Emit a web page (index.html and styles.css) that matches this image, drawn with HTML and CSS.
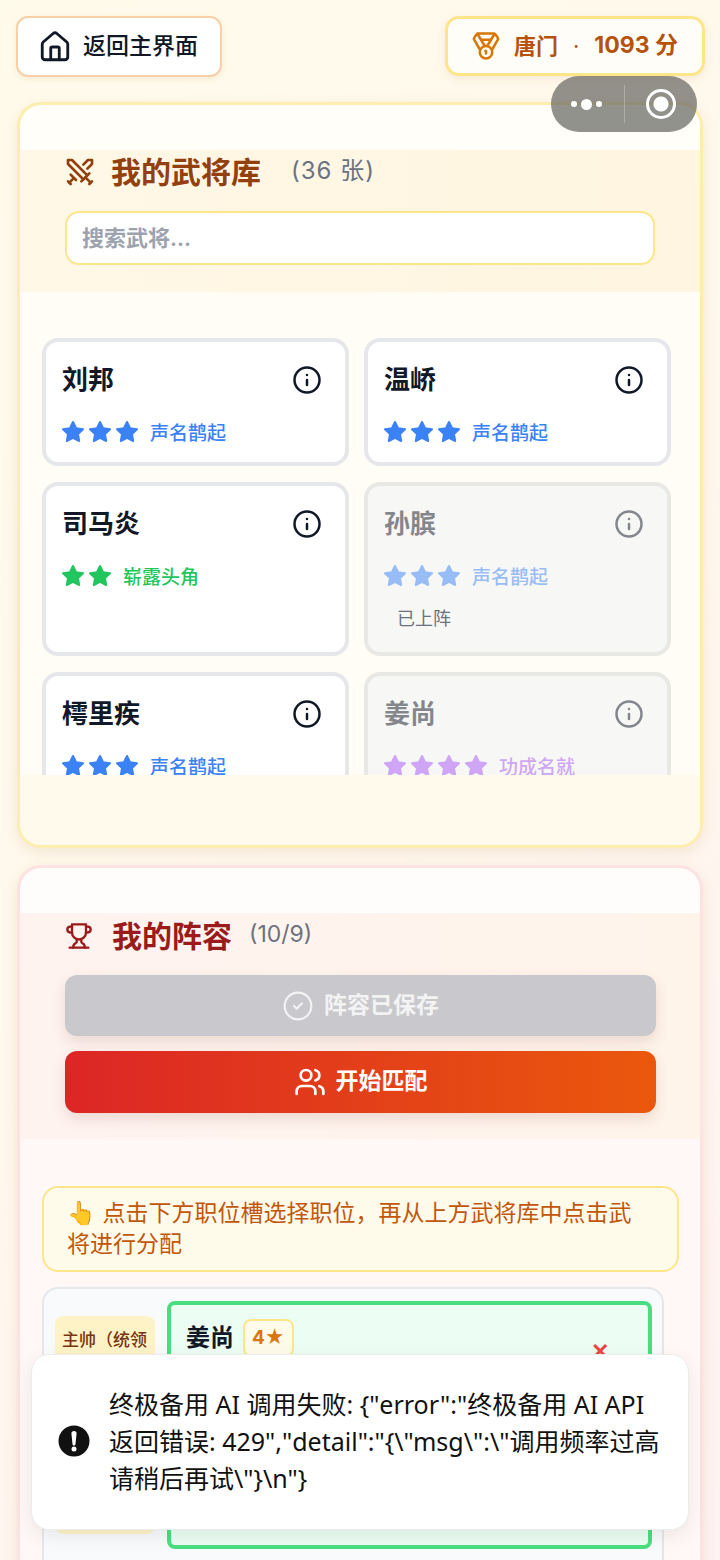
FILE: index.html
```html
<!DOCTYPE html>
<html lang="zh-CN">
<head>
    <meta charset="UTF-8">
    <meta name="viewport" content="width=device-width, initial-scale=1.0">
    <title>我的武将库</title>
    <link rel="stylesheet" href="styles.css">
</head>
<body>
    <svg class="defs" width="0" height="0">
        <symbol id="i-star" viewBox="0 0 24 24"><polygon points="12 2 15.09 8.26 22 9.27 17 14.14 18.18 21.02 12 17.77 5.82 21.02 7 14.14 2 9.27 8.91 8.26" fill="currentColor" stroke="currentColor" stroke-width="2" stroke-linejoin="round"/></symbol>
        <symbol id="i-info" viewBox="0 0 24 24"><g fill="none" stroke="currentColor" stroke-width="2" stroke-linecap="round"><circle cx="12" cy="12" r="10"/><path d="M12 16v-4"/><path d="M12 8h.01"/></g></symbol>
    </svg>

    <div class="topbar">
        <button class="back-btn">
            <svg class="ico-34" viewBox="0 0 24 24" fill="none" stroke="currentColor" stroke-width="2" stroke-linecap="round" stroke-linejoin="round"><path d="M15 21v-8a1 1 0 0 0-1-1h-4a1 1 0 0 0-1 1v8"/><path d="M3 10a2 2 0 0 1 .709-1.528l7-5.999a2 2 0 0 1 2.582 0l7 5.999A2 2 0 0 1 21 10v9a2 2 0 0 1-2 2H5a2 2 0 0 1-2-2z"/></svg>
            <span>返回主界面</span>
        </button>
        <div class="score">
            <svg class="ico-30 medal" viewBox="0 0 24 24" fill="none" stroke="currentColor" stroke-width="2" stroke-linecap="round" stroke-linejoin="round"><path d="M7.21 15 2.66 7.14a2 2 0 0 1 .13-2.2L4.4 2.8A2 2 0 0 1 6 2h12a2 2 0 0 1 1.6.8l1.6 2.14a2 2 0 0 1 .14 2.2L16.79 15"/><path d="M11 12 5.12 2.2"/><path d="m13 12 5.88-9.8"/><path d="M8 7h8"/><circle cx="12" cy="17" r="5"/><path d="M12 18v-2h-.5"/></svg>
            <span class="score-name">唐门</span>
            <span class="score-dot">·</span>
            <span class="score-num">1093 分</span>
        </div>
    </div>

    <section class="panel panel-lib">
        <div class="panel-head">
            <div class="title-row">
                <svg class="ico-32" viewBox="0 0 24 24" fill="none" stroke="currentColor" stroke-width="2" stroke-linecap="round" stroke-linejoin="round"><polyline points="14.5 17.5 3 6 3 3 6 3 17.5 14.5"/><line x1="13" y1="19" x2="19" y2="13"/><line x1="16" y1="16" x2="20" y2="20"/><line x1="19" y1="21" x2="21" y2="19"/><polyline points="14.5 6.5 18 3 21 3 21 6 17.5 9.5"/><line x1="5" y1="14" x2="9" y2="18"/><line x1="7" y1="17" x2="4" y2="20"/><line x1="3" y1="19" x2="5" y2="21"/></svg>
                <h2>我的武将库</h2>
                <span class="count count-lib">(36 张)</span>
            </div>
            <div class="search">搜索武将...</div>
        </div>

        <div class="lib-scroll">
            <div class="card-grid">
                <div class="card">
                    <div class="card-top"><span class="name">刘邦</span><svg class="info"><use href="#i-info"/></svg></div>
                    <div class="rank blue">
                        <svg class="star"><use href="#i-star"/></svg><svg class="star"><use href="#i-star"/></svg><svg class="star"><use href="#i-star"/></svg>
                        <span>声名鹊起</span>
                    </div>
                </div>
                <div class="card">
                    <div class="card-top"><span class="name">温峤</span><svg class="info"><use href="#i-info"/></svg></div>
                    <div class="rank blue">
                        <svg class="star"><use href="#i-star"/></svg><svg class="star"><use href="#i-star"/></svg><svg class="star"><use href="#i-star"/></svg>
                        <span>声名鹊起</span>
                    </div>
                </div>
                <div class="card">
                    <div class="card-top"><span class="name">司马炎</span><svg class="info"><use href="#i-info"/></svg></div>
                    <div class="rank green">
                        <svg class="star"><use href="#i-star"/></svg><svg class="star"><use href="#i-star"/></svg>
                        <span>崭露头角</span>
                    </div>
                </div>
                <div class="card used">
                    <div class="card-top"><span class="name">孙膑</span><svg class="info"><use href="#i-info"/></svg></div>
                    <div class="rank blue">
                        <svg class="star"><use href="#i-star"/></svg><svg class="star"><use href="#i-star"/></svg><svg class="star"><use href="#i-star"/></svg>
                        <span>声名鹊起</span>
                    </div>
                    <div class="used-tag">已上阵</div>
                </div>
                <div class="card">
                    <div class="card-top"><span class="name">樗里疾</span><svg class="info"><use href="#i-info"/></svg></div>
                    <div class="rank blue">
                        <svg class="star"><use href="#i-star"/></svg><svg class="star"><use href="#i-star"/></svg><svg class="star"><use href="#i-star"/></svg>
                        <span>声名鹊起</span>
                    </div>
                </div>
                <div class="card used">
                    <div class="card-top"><span class="name">姜尚</span><svg class="info"><use href="#i-info"/></svg></div>
                    <div class="rank purple">
                        <svg class="star"><use href="#i-star"/></svg><svg class="star"><use href="#i-star"/></svg><svg class="star"><use href="#i-star"/></svg><svg class="star"><use href="#i-star"/></svg>
                        <span>功成名就</span>
                    </div>
                </div>
            </div>
        </div>
        <div class="lib-foot"></div>
    </section>

    <section class="panel panel-team">
        <div class="panel-head">
            <div class="title-row">
                <svg class="ico-28" viewBox="0 0 24 24" fill="none" stroke="currentColor" stroke-width="2" stroke-linecap="round" stroke-linejoin="round"><path d="M6 9H4.5a2.5 2.5 0 0 1 0-5H6"/><path d="M18 9h1.5a2.5 2.5 0 0 0 0-5H18"/><path d="M4 22h16"/><path d="M10 14.66V17c0 .55-.47.98-.97 1.21C7.85 18.75 7 20.24 7 22"/><path d="M14 14.66V17c0 .55.47.98.97 1.21C16.15 18.75 17 20.24 17 22"/><path d="M18 2H6v7a6 6 0 0 0 12 0V2Z"/></svg>
                <h2>我的阵容</h2>
                <span class="count">(10/9)</span>
            </div>
            <button class="wide-btn saved">
                <svg class="ico-32" viewBox="0 0 24 24" fill="none" stroke="currentColor" stroke-width="1.6" stroke-linecap="round" stroke-linejoin="round"><circle cx="12" cy="12" r="10"/><path d="m9 12 2 2 4-4"/></svg>
                <span>阵容已保存</span>
            </button>
            <button class="wide-btn match">
                <svg class="ico-32" viewBox="0 0 24 24" fill="none" stroke="currentColor" stroke-width="2" stroke-linecap="round" stroke-linejoin="round"><path d="M16 21v-2a4 4 0 0 0-4-4H6a4 4 0 0 0-4 4v2"/><circle cx="9" cy="7" r="4"/><path d="M22 21v-2a4 4 0 0 0-3-3.87"/><path d="M16 3.13a4 4 0 0 1 0 7.75"/></svg>
                <span>开始匹配</span>
            </button>
        </div>

        <div class="team-body">
            <p class="hint">👆 点击下方职位槽选择职位，再从上方武将库中点击武将进行分配</p>
            <div class="slots">
                <div class="slot-label">主帅（统领全军）</div>
                <div class="slot-card">
                    <span class="slot-name">姜尚</span>
                    <span class="slot-badge">4★</span>
                    <span class="slot-x">✕</span>
                </div>
            </div>
        </div>
    </section>

    <!-- wechat capsule -->
    <div class="capsule">
        <div class="dots"><i></i><i class="big"></i><i></i></div>
        <div class="cap-line"></div>
        <div class="ring"></div>
    </div>

    <div class="toast">
        <svg class="toast-ico" viewBox="0 0 32 32"><circle cx="16" cy="16" r="15.5" fill="#111"/><path d="M13.4 8.6a2.6 2.6 0 0 1 5.2 0L17.5 19a1.5 1.5 0 0 1-3 0z" fill="#fff"/><circle cx="16" cy="24" r="2.5" fill="#fff"/></svg>
        <p>终极备用 AI 调用失败: {"error":"终极备用 AI API 返回错误: 429","detail":"{\"msg\":\"调用频率过高请稍后再试\"}\n"}</p>
    </div>
</body>
</html>
```

FILE: styles.css
```css
* {
    box-sizing: border-box;
}
html, body {
    margin: 0;
    height: 1560px;
    overflow: hidden;
}
body {
    position: relative;
    padding: 16px 15px 0 17px;
    background: linear-gradient(135deg, #fffbeb 0%, #fff7ed 55%, #fef2f2 100%);
    font-family: Inter, "Noto Sans CJK SC", sans-serif;
    line-height: 1.3;
    color: #111827;
}
button {
    font-family: inherit;
    line-height: 1.3;
}
.defs {
    position: absolute;
}
.ico-28 {
    width: 28px;
    height: 28px;
    flex: none;
}
.ico-30 {
    width: 30px;
    height: 30px;
    flex: none;
}
.ico-32 {
    width: 32px;
    height: 32px;
    flex: none;
}
.ico-34 {
    width: 34px;
    height: 34px;
    flex: none;
}

/* top bar */
.topbar {
    display: flex;
    justify-content: space-between;
    align-items: flex-start;
    height: 86px;
    margin-left: -1px;
}
.back-btn {
    display: flex;
    align-items: center;
    gap: 11px;
    width: 206px;
    height: 61px;
    padding: 0 0 0 20px;
    background: #fff;
    border: 2px solid #f8cfa6;
    border-radius: 12px;
    color: #111827;
    font-size: 23px;
    font-weight: 500;
    box-shadow: 0 2px 6px rgba(180, 120, 60, 0.12);
}
.score {
    display: flex;
    align-items: center;
    width: 260px;
    height: 60px;
    padding-left: 23px;
    background: #fffdf8;
    border: 3px solid #fde68a;
    border-radius: 14px;
    color: #b45309;
    font-size: 22px;
    font-weight: 600;
    box-shadow: 0 3px 8px rgba(180, 120, 60, 0.12);
}
.medal {
    color: #d97706;
}
.score-name {
    margin-left: 13px;
}
.score-dot {
    margin: 0 15px 0 15px;
    font-weight: 400;
}
.score-num {
    font-size: 23px;
    font-weight: 700;
    white-space: nowrap;
}

/* panels */
.panel {
    width: 686px;
    border: 3px solid #fef3c7;
    border-radius: 24px;
    padding-top: 45px;
    overflow: hidden;
    box-shadow: 0 4px 14px rgba(180, 130, 60, 0.14);
}
.panel-lib {
    height: 746px;
    background: #fffef9;
    border-color: #fdeeb0;
}
.panel-team {
    height: 720px;
    margin-top: 17px;
    background: #fffdfc;
    border-color: #fde2e2;
}
.panel-head {
    padding: 0 45px;
}
.panel-lib .panel-head {
    height: 142px;
    background: linear-gradient(90deg, #fff8e6, #fff5e0);
}
.panel-team .panel-head {
    height: 226px;
    background: linear-gradient(90deg, #fff3f0, #fff4ea);
}
.title-row {
    display: flex;
    align-items: center;
    height: 44px;
    color: #92400e;
}
.panel-lib .title-row svg {
    margin-left: -1px;
}
.panel-team .title-row {
    height: 46px;
    color: #991b1b;
}
.title-row h2 {
    margin: 0 0 0 19px;
    font-size: 30px;
    font-weight: 700;
    line-height: 44px;
}
.panel-lib .title-row h2 {
    margin-left: 15px;
}
.count {
    margin: -3px 0 0 17px;
    color: #6b7280;
    font-size: 23px;
    font-weight: 400;
}
.count-lib {
    margin-left: 30px;
    font-size: 24px;
    letter-spacing: 1px;
}
.search {
    height: 54px;
    margin-top: 17px;
    padding-left: 15px;
    background: #fff;
    border: 2px solid #fde68a;
    border-radius: 14px;
    color: #9ca3af;
    font-size: 22px;
    font-weight: 600;
    line-height: 50px;
}

/* general cards */
.lib-scroll {
    height: 483px;
    overflow: hidden;
    padding: 46px 29px 0 22px;
    background: #fffdf5;
}
.lib-foot {
    height: 70px;
    background: #fffaeb;
}
.card-grid {
    display: grid;
    grid-template-columns: 1fr 1fr;
    column-gap: 15px;
    row-gap: 16px;
}
.card {
    padding: 16px 16px 18px;
    background: #fff;
    border: 4px solid #e5e7eb;
    border-radius: 16px;
}
.card-top {
    display: flex;
    justify-content: space-between;
    align-items: center;
    height: 44px;
    margin-bottom: 18px;
    padding-right: 7px;
}
.name {
    font-size: 26px;
    font-weight: 700;
    color: #111827;
}
.info {
    width: 30px;
    height: 30px;
    color: #111827;
}
.rank {
    display: flex;
    align-items: center;
    height: 24px;
    margin-left: -1px;
    font-size: 19px;
    font-weight: 500;
}
.rank span {
    margin: 4px 0 0 8px;
}
.star {
    width: 24px;
    height: 24px;
    margin-right: 3px;
}
.blue {
    color: #3b82f6;
}
.green {
    color: #22c55e;
}
.purple {
    color: #a855f7;
}
.used {
    background: #f7f7f5;
    border-color: #e8e8e4;
}
.used .name,
.used .info {
    opacity: 0.5;
}
.used .rank {
    opacity: 0.5;
}
.used-tag {
    margin: 19px 0 3px 13px;
    color: #6b7280;
    font-size: 18px;
    line-height: 24px;
}

/* team panel */
.wide-btn {
    display: flex;
    justify-content: center;
    align-items: center;
    gap: 10px;
    width: 591px;
    height: 61px;
    border: 0;
    border-radius: 12px;
    color: #fff;
    font-size: 23px;
    font-weight: 600;
    box-shadow: 0 6px 14px rgba(120, 60, 40, 0.14);
}
.saved {
    margin-top: 16px;
    background: #c9c8cc;
    color: #f3f3f4;
}
.match {
    margin-top: 15px;
    height: 62px;
    background: linear-gradient(90deg, #dc2626, #ea580c);
}
.team-body {
    padding: 47px 21px 0 22px;
    height: 450px;
    background: #fff8f7;
}
.hint {
    margin: 0;
    padding: 10px 23px;
    background: #fffbeb;
    border: 2px solid #fde68a;
    border-radius: 16px;
    color: #c2570c;
    font-size: 23px;
    line-height: 31px;
}
.slots {
    display: flex;
    gap: 12px;
    width: 622px;
    height: 290px;
    margin-top: 15px;
    padding: 12px 12px 0 11px;
    background: #f8fafc;
    border: 2px solid #e5e7eb;
    border-radius: 16px;
}
.slot-label {
    flex: none;
    width: 100px;
    height: 218px;
    margin-top: 15px;
    padding: 8px 7px;
    background: #fef3c7;
    border-radius: 8px;
    color: #78350f;
    font-size: 17px;
    font-weight: 500;
    line-height: 32px;
}
.slot-card {
    position: relative;
    flex: none;
    display: flex;
    align-items: flex-start;
    gap: 9px;
    width: 485px;
    height: 248px;
    padding: 14px 15px;
    background: #ecfdf3;
    border: 4px solid #4ade80;
    border-radius: 8px;
}
.slot-name {
    font-size: 24px;
    font-weight: 700;
    line-height: 38px;
}
.slot-badge {
    padding: 0 7px;
    height: 38px;
    background: #fffbeb;
    border: 2px solid #fde68a;
    border-radius: 8px;
    color: #d97706;
    font-size: 19px;
    font-weight: 700;
    line-height: 34px;
}
.slot-x {
    position: absolute;
    top: 32px;
    right: 39px;
    color: #ef4444;
    font-size: 22px;
    font-weight: 700;
}

/* overlays */
.capsule {
    position: absolute;
    top: 76px;
    left: 551px;
    width: 146px;
    height: 56px;
    display: flex;
    align-items: center;
    background: rgba(100, 100, 96, 0.7);
    border-radius: 28px;
}
.dots {
    display: flex;
    align-items: center;
    gap: 4px;
    margin-left: 20px;
}
.dots i {
    display: block;
    width: 6px;
    height: 6px;
    background: #fff;
    border-radius: 50%;
}
.dots i.big {
    width: 11px;
    height: 11px;
}
.cap-line {
    width: 1px;
    height: 38px;
    margin-left: 22px;
    background: rgba(255, 255, 255, 0.25);
}
.ring {
    width: 30px;
    height: 30px;
    margin-left: 21px;
    border: 3px solid #fff;
    border-radius: 50%;
    background: radial-gradient(circle, #fff 0 7px, transparent 8px);
}
.toast {
    position: absolute;
    top: 1354px;
    left: 31px;
    display: flex;
    align-items: center;
    gap: 19px;
    width: 658px;
    height: 176px;
    padding: 0 27px 2px 26px;
    background: #fff;
    border: 1px solid #ececec;
    border-radius: 18px;
    box-shadow: 0 6px 20px rgba(0, 0, 0, 0.08);
}
.toast-ico {
    width: 32px;
    height: 32px;
    flex: none;
}
.toast p {
    margin: 0;
    color: #111;
    font-family: "Noto Sans", "Noto Sans CJK SC", sans-serif;
    font-size: 25px;
    line-height: 37px;
    word-break: break-all;
}
```
